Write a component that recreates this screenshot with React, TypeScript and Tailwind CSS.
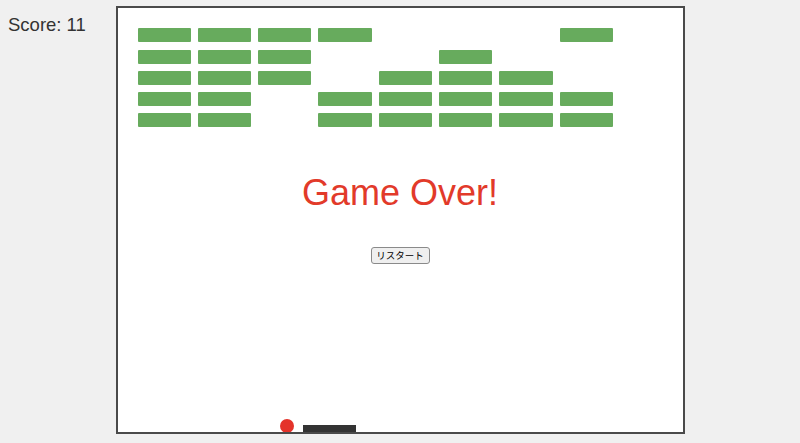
import React from "react";

// 1 = brick still standing
const bricks = [
  [1, 1, 1, 1, 0, 0, 0, 1],
  [1, 1, 1, 0, 0, 1, 0, 0],
  [1, 1, 1, 0, 1, 1, 1, 0],
  [1, 1, 0, 1, 1, 1, 1, 1],
  [1, 1, 0, 1, 1, 1, 1, 1],
];

export default function App() {
  return (
    <div
      className="relative w-full h-[443px] bg-[#f0f0f0] overflow-hidden flex justify-center pt-[6px]"
      style={{ fontFamily: '"Liberation Sans", Arial, sans-serif' }}
    >
      <div className="absolute left-[8px] top-[16px] text-[18.5px] leading-none text-[#333]">
        Score: 11
      </div>

      <div className="relative w-[569px] h-[428px] bg-white border-2 border-[#4a4a4a] overflow-hidden">
        <div className="grid grid-cols-[repeat(8,53.3px)] gap-x-[7px] gap-y-[7.3px] pl-[20px] pt-[20.3px]">
          {bricks.flatMap((row, r) =>
            row.map((b, c) => (
              <div
                key={`${r}-${c}`}
                className={b ? "h-[14px] bg-[#67ab5d] rounded-[1px]" : "h-[14px]"}
              />
            ))
          )}
        </div>

        <div className="flex flex-col items-center mt-[48px]">
          <div className="text-[36px] leading-none text-[#e23a2a]">Game Over!</div>
          <button
            className="mt-[36px] w-[59px] h-[17px] bg-[#efefef] border border-[#8a8a8a] rounded-[3px] text-[9.5px] leading-none text-black flex items-center justify-center"
            style={{ fontFamily: '"Noto Sans CJK JP", sans-serif' }}
          >
            リスタート
          </button>
        </div>

        {/* ball + paddle */}
        <div className="absolute left-[162px] top-[411px] w-[14px] h-[14px] rounded-full bg-[#e4332a]" />
        <div className="absolute left-[185px] bottom-0 w-[53px] h-[7px] bg-[#333]" />
      </div>
    </div>
  );
}
